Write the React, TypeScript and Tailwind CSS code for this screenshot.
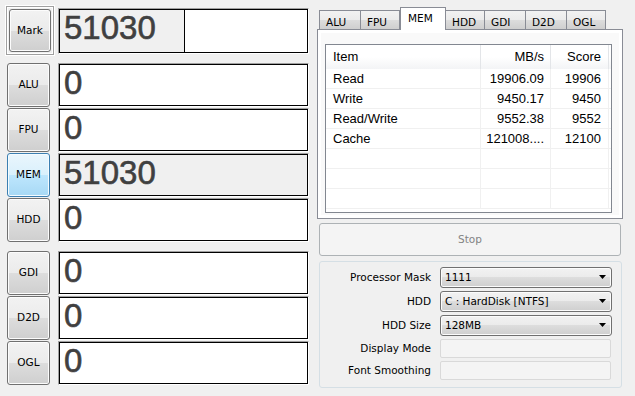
import type { ReactNode } from 'react';

const ui = "font-['DejaVu_Sans',sans-serif] text-[10.5px]";
const digits =
  "font-['Liberation_Sans',sans-serif] text-[33px] leading-[36px] text-[#404040] [-webkit-text-stroke:0.6px_#404040]";
const winButton =
  'rounded-[3px] border border-[#707070] bg-[linear-gradient(to_bottom,#f2f2f2_0%,#ebebeb_50%,#dddddd_50%,#cfcfcf_100%)] shadow-[inset_0_0_0_1px_#fcfcfc]';
const hotButton =
  'rounded-[3px] border border-[#3c7fb1] bg-[linear-gradient(to_bottom,#eaf6fd_0%,#d9f0fc_50%,#bee6fd_50%,#a7d9f5_100%)] shadow-[inset_0_0_0_1px_#f4fbff]';

const rows = [
  { item: 'Read', rate: '19906.09', score: '19906' },
  { item: 'Write', rate: '9450.17', score: '9450' },
  { item: 'Read/Write', rate: '9552.38', score: '9552' },
  { item: 'Cache', rate: '121008....', score: '12100' },
  { item: '', rate: '', score: '' },
  { item: '', rate: '', score: '' },
  { item: '', rate: '', score: '' },
];

const tabs = [
  { name: 'ALU', w: 'w-[42px]' },
  { name: 'FPU', w: 'w-[40px]' },
  { name: 'MEM', w: 'w-[46px]' },
  { name: 'HDD', w: 'w-[40px]' },
  { name: 'GDI', w: 'w-[42px]' },
  { name: 'D2D', w: 'w-[42px]' },
  { name: 'OGL', w: 'w-[40px]' },
];

function Score({ value, gray = false }: { value: string; gray?: boolean }) {
  return (
    <div className="h-full w-[251px] border border-t-[#a0a0a0] border-l-[#a0a0a0] border-b-[#ffffff] border-r-[#ffffff]">
      <div className={`h-full border border-black pl-[4px] ${digits} ${gray ? 'bg-[#f0f0f0]' : 'bg-white'}`}>
        {value}
      </div>
    </div>
  );
}

function Row({ label, value, hot = false }: { label: string; value: string; hot?: boolean }) {
  return (
    <div className="flex h-[44px] items-stretch">
      <div className="ml-[7px] w-[43px]">
        <div
          className={`flex h-full items-center justify-center text-black ${ui} ${hot ? hotButton : winButton}`}
        >
          {label}
        </div>
      </div>
      <div className="ml-[8px]">
        <Score value={value} gray={hot} />
      </div>
    </div>
  );
}

function Combo({ text }: { text: string }) {
  return (
    <div
      className={`flex h-[21px] w-[172px] items-center justify-between pl-[4px] pr-[4px] text-black ${ui} ${winButton}`}
    >
      <span>{text}</span>
      <svg width="8" height="5" viewBox="0 0 8 5">
        <path d="M0 0h7L3.5 4z" fill="#000" />
      </svg>
    </div>
  );
}

function Field({ label, children }: { label: string; children: ReactNode }) {
  return (
    <div className="flex items-center">
      <div className={`w-[111px] text-right text-black ${ui}`}>{label}</div>
      <div className="ml-[9px]">{children}</div>
    </div>
  );
}

export default function App() {
  return (
    <div className="flex h-[396px] w-[635px] overflow-hidden bg-[#f0f0f0]">
      {/* score column */}
      <div className="w-[317px] shrink-0 pt-[5px]">
        <div className="flex h-[51px]">
          <div className="ml-[5px] h-[51px] w-[50px] border border-white">
            <div className="h-full border border-[#a0a0a0]">
              <div className="h-full border border-white p-px">
                <div className={`flex h-full items-center justify-center text-black ${ui} ${winButton}`}>
                  Mark
                </div>
              </div>
            </div>
          </div>
          <div className="ml-[3px] mt-[3px] h-[46px] w-[251px] border border-t-[#a0a0a0] border-l-[#a0a0a0] border-b-white border-r-white">
            <div className={`flex h-full border border-black ${digits}`}>
              <div className="w-[125px] border-r border-black bg-[#f0f0f0] pl-[4px]">51030</div>
              <div className="flex-1 bg-white" />
            </div>
          </div>
        </div>

        <div className="mt-[7px] flex flex-col gap-px">
          <Row label="ALU" value="0" />
          <Row label="FPU" value="0" />
          <Row label="MEM" value="51030" hot />
          <Row label="HDD" value="0" />
        </div>

        <div className="mt-[9px] flex flex-col gap-px">
          <Row label="GDI" value="0" />
          <Row label="D2D" value="0" />
          <Row label="OGL" value="0" />
        </div>
      </div>

      {/* detail column */}
      <div className="w-[306px] shrink-0 pt-[8px]">
        <div className="flex h-[21px] items-end pl-[2px]">
          {tabs.map((t) =>
            t.name === 'MEM' ? (
              <div
                key={t.name}
                className={`relative z-10 -mb-px h-[23px] ${t.w} border border-b-0 border-[#898c95] bg-white pl-[7px] pt-[3px] text-black ${ui}`}
              >
                {t.name}
              </div>
            ) : (
              <div
                key={t.name}
                className={`-ml-px h-[19px] ${t.w} first:ml-0 border border-b-0 border-[#898c95] bg-[linear-gradient(to_bottom,#f2f2f2_0%,#ebebeb_50%,#dddddd_50%,#cfcfcf_100%)] pl-[6px] pt-[4px] text-black ${ui}`}
              >
                {t.name}
              </div>
            )
          )}
        </div>

        <div className="h-[190px] w-[306px] border border-[#898c95] bg-white p-[3px]">
          <div className="h-full bg-[#f9f9f9] pl-[4px] pt-[11px]">
            <div className="h-[169px] w-[287px] border border-[#828790] bg-white font-['Liberation_Sans',sans-serif] text-[13px] text-black">
              <div className="flex h-[24px] bg-[linear-gradient(to_bottom,#ffffff_0%,#ffffff_50%,#f3f4f6_100%)]">
                <div className="flex w-[155px] items-center border-r border-[#e3e5e8] pl-[7px]">Item</div>
                <div className="flex w-[70px] items-center justify-end border-r border-[#e3e5e8] pr-[6px]">MB/s</div>
                <div className="flex w-[58px] items-center justify-end border-r border-[#e3e5e8] pr-[7px]">Score</div>
              </div>
              {rows.map((r, i) => (
                <div key={i} className="flex h-[20px] border-b border-[#f0f0f0]">
                  <div className="flex w-[155px] items-center border-r border-[#f0f0f0] pl-[7px]">{r.item}</div>
                  <div className="flex w-[70px] items-center justify-end border-r border-[#f0f0f0] pr-[6px]">{r.rate}</div>
                  <div className="flex w-[58px] items-center justify-end border-r border-[#f0f0f0] pr-[7px]">{r.score}</div>
                </div>
              ))}
            </div>
          </div>
        </div>

        <div
          className={`ml-[2px] mt-[4px] flex h-[33px] w-[302px] items-center justify-center rounded-[3px] border border-[#adb2b5] bg-[#f4f4f4] text-[#838383] ${ui}`}
        >
          Stop
        </div>

        <div className="ml-[2px] mt-[5px] flex h-[127px] w-[303px] flex-col gap-[3px] rounded-[3px] border border-[#d5dfe5] pt-[5px]">
          <Field label="Processor Mask">
            <Combo text="1111" />
          </Field>
          <Field label="HDD">
            <Combo text="C : HardDisk [NTFS]" />
          </Field>
          <Field label="HDD Size">
            <Combo text="128MB" />
          </Field>
          <Field label="Display Mode">
            <div className="h-[19px] w-[171px] rounded-[2px] border border-[#d9d9d9] bg-[#f4f4f4]" />
          </Field>
          <Field label="Font Smoothing">
            <div className="h-[19px] w-[171px] rounded-[2px] border border-[#d9d9d9] bg-[#f4f4f4]" />
          </Field>
        </div>
      </div>
    </div>
  );
}
